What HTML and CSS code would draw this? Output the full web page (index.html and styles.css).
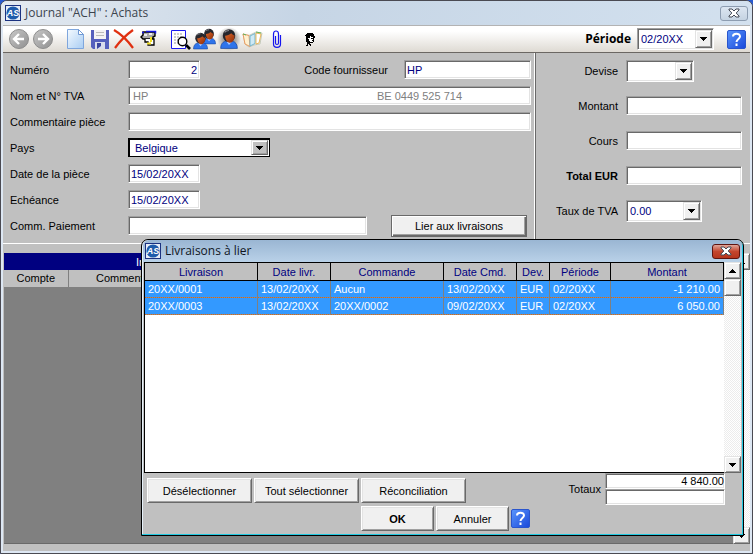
FILE: index.html
```
<!DOCTYPE html>
<html lang="fr">
<head>
<meta charset="utf-8">
<title>Journal "ACH" : Achats</title>
<link rel="stylesheet" href="styles.css">
</head>
<body>
<svg class="defs" aria-hidden="true">
  <defs>
    <linearGradient id="ball" x1="0" y1="0" x2="1" y2="1"><stop offset="0" stop-color="#c9c9c9"/><stop offset="1" stop-color="#8f8f8f"/></linearGradient>
    <linearGradient id="paper" x1="0" y1="0" x2="1" y2="1"><stop offset="0" stop-color="#f4faff"/><stop offset="1" stop-color="#a9cdf3"/></linearGradient>
    <linearGradient id="skin" x1="0" y1="0" x2="1" y2="1"><stop offset="0" stop-color="#e0682a"/><stop offset="1" stop-color="#8c2c08"/></linearGradient>
    <radialGradient id="glow"><stop offset="0.5" stop-color="#a5a19c"/><stop offset="1" stop-color="#a5a19c" stop-opacity="0"/></radialGradient>
    <linearGradient id="helpfill" x1="0" y1="0" x2="1" y2="1"><stop offset="0" stop-color="#5a96fc"/><stop offset="1" stop-color="#1a48da"/></linearGradient>
    <symbol id="logo" viewBox="0 0 16 16">
      <rect width="16" height="16" fill="#1b3280"/><rect x="1" y="1" width="14" height="14" fill="#e8eef8"/>
      <circle cx="8" cy="8" r="6.6" fill="#1f5cab"/>
      <text x="8" y="11.3" text-anchor="middle" class="logo-text">AS</text>
    </symbol>
    <symbol id="down" viewBox="0 0 7 4"><path d="M0 0h7v1h-1v1h-1v1h-1v1h-1v-1h-1v-1h-1v-1h-1z"/></symbol>
    <symbol id="up" viewBox="0 0 7 4"><path d="M0 4h7v-1h-1v-1h-1v-1h-1v-1h-1v1h-1v1h-1v1h-1z"/></symbol>
    <symbol id="cross" viewBox="0 0 12 10"><path d="M1 1h3l2 2 2-2h3v1L8.200 5 11 8v1H8L6 7 4 9H1V8l2.800-3L1 2z" fill="#fff" stroke="#454b57" stroke-width="1"/></symbol>
    <symbol id="help" viewBox="0 0 19 19">
      <rect x="0.500" y="0.500" width="18" height="18" rx="1.500" fill="url(#helpfill)" stroke="#2a55cc"/>
      <path d="M6 6.500C6 3 13 2.800 13 6.500c0 2.300-3.500 2.600-3.500 5.500" fill="none" stroke="#fff" stroke-width="2"/><rect x="8.500" y="13.500" width="2" height="2.500" fill="#fff"/>
    </symbol>
    <symbol id="person" viewBox="0 0 16 18">
      <path d="M0.500 17.500c0-4 2-6 4.500-6.500h6c3 .5 4.500 3 4.500 6.500z" fill="#2f74ea" stroke="#134299" stroke-width="0.600"/>
      <path d="M5.500 11l2.500 3.500 3-3.500z" fill="#a9c9ff"/>
      <ellipse cx="8" cy="6" rx="5.600" ry="5.800" fill="#26262c"/>
      <path d="M4.500 6c2 0 4-.8 5.500-2.200 1 1.200 2 1.700 3 1.900C13.200 9.500 11.200 12.400 9 12.400S4.700 9.800 4.500 6z" fill="url(#skin)"/>
      <path d="M4 3c1-1.300 2.500-1.700 4-1.700" stroke="#8a8a90" fill="none"/>
    </symbol>
  </defs>
</svg>

<main class="window">
  <header class="titlebar">
    <svg class="logo"><use href="#logo"/></svg>
    <h1>Journal "ACH" : Achats</h1>
    <button class="close" type="button" aria-label="Fermer"><svg><use href="#cross"/></svg></button>
  </header>

  <nav class="toolbar">
    <div class="tools">
      <button type="button" aria-label="Précédent"><svg viewBox="0 0 24 24"><circle cx="12" cy="12" r="9.500" fill="url(#ball)" stroke="#8d8d8d"/><path d="M17 12H8M12 7l-5 5 5 5" fill="none" stroke="#fff" stroke-width="2.400"/></svg></button>
      <button type="button" aria-label="Suivant"><svg viewBox="0 0 24 24"><circle cx="12" cy="12" r="9.500" fill="url(#ball)" stroke="#8d8d8d"/><path d="M7 12h9M12 7l5 5-5 5" fill="none" stroke="#fff" stroke-width="2.400"/></svg></button>
    </div>
    <div class="tools">
      <button type="button" aria-label="Nouveau"><svg viewBox="0 0 24 24"><path d="M3.500 2.500h11l5 5v14h-16z" fill="url(#paper)" stroke="#7fa6dc"/><path d="M14.500 2.500v5h5z" fill="#fff" stroke="#6f98d4"/></svg></button>
      <button type="button" aria-label="Enregistrer"><svg viewBox="0 0 24 24"><path d="M3 3h18v19H5l-2-2z" fill="#5560bd"/><rect x="6" y="3" width="12" height="9" fill="#f3f3f3"/><path d="M8 5.500h8M8 8.500h8" stroke="#bbb"/><rect x="7" y="15" width="10" height="7" fill="#d9dcec"/><path d="M9 16h4v3l-4 3z" fill="#3b45a0"/></svg></button>
      <button type="button" aria-label="Supprimer"><svg viewBox="0 0 24 24"><path d="M2 3c7 4 14 11 19 18M21 3C14 8 8 14 3 21" fill="none" stroke="#e03010" stroke-width="2.200"/></svg></button>
      <button type="button" aria-label="Paiement"><svg viewBox="0 0 24 24"><path d="M7 5h12v4l-2 1v2H7l-2-2 2-2z" fill="#aaa" stroke="#000" stroke-width="1.400"/><path d="M6 5.500h2M10 4.500h9.500v2" fill="none" stroke="#1515e0" stroke-width="1.500"/><path d="M8 8h3M13 7h3" stroke="#fff" stroke-width="1.500"/><path d="M9 12v3h3v3h6v-6h-4" fill="#fff" stroke="#000" stroke-width="1.300"/><path d="M15 10v5M11 16.500h4" stroke="#f3df25" stroke-width="2"/></svg></button>
    </div>
    <div class="tools">
      <button type="button" aria-label="Aperçu"><svg viewBox="0 0 24 24"><path d="M2.500 3.500h14v18h-14z" fill="#fff" stroke="#1a1af0"/><path d="M5 7h9M5 10h9M5 13h6M5 16h5" stroke="#999" stroke-dasharray="2 1"/><circle cx="13.500" cy="14.500" r="4.300" fill="#fff" stroke="#000" stroke-width="1.400"/><path d="M17 18l4 4" stroke="#000" stroke-width="2.600"/></svg></button>
      <button type="button" aria-label="Tiers"><svg viewBox="0 0 24 24"><use href="#person" x="9" y="1" width="14" height="17"/><use href="#person" x="0" y="5" width="15" height="18"/></svg></button>
      <button type="button" aria-label="Fournisseur"><svg viewBox="0 0 24 24"><circle cx="12" cy="12" r="12" fill="url(#glow)"/><use href="#person" x="3" y="2" width="18" height="20"/></svg></button>
      <button type="button" aria-label="Carte"><svg viewBox="0 0 24 24"><path d="M2 7l6 1.500 7-3.500 6 1-2 11-6 1-5 2-4-3z" fill="#f5f2df" stroke="#b9c0b0" stroke-width="0.800"/><path d="M2 7l6 1.500 1 11-5-2.500z" fill="#fff0cf" stroke="#e89c62"/><path d="M9 9l5-2.500v10L9 19z" fill="#cfe9f5" stroke="#74b5cf"/><path d="M15 6l5 1-2 9-3 1z" fill="#fff" stroke="#e7a83b" stroke-width="0.800"/><path d="M2 7l3 1M15 5l5 1" stroke="#65b35a"/></svg></button>
      <button type="button" aria-label="Pièces jointes"><svg viewBox="0 0 24 24"><path d="M10.500 9v7c0 2 3 2 3 0V7c0-4-5-4-5 0v10c0 4.500 7 4.500 7 0V8" fill="none" stroke="#1515f0" stroke-width="1.200"/></svg></button>
    </div>
    <div class="tools">
      <button type="button" aria-label="Contact"><svg viewBox="0 0 24 24"><path d="M8 14V9H7V8h1V7h1V6h6v1h1v2h1v2h-1v4h-1v1h-3v1h1v2h-1v-1h-1v-1h-1v2H8v-1h1v-3H8z" fill="#000"/><path d="M12 9h1v1h2v5h-3v-1h-1v-2h-1v-1h2z" fill="#fff"/><path d="M13 11.500h2M14 13.500h1" stroke="#000"/></svg></button>
    </div>
    <label class="period-label" for="periode">Période</label>
    <div class="dropdown period">
      <select id="periode"><option>02/20XX</option></select>
      <span class="knob"><svg><use href="#down"/></svg></span>
    </div>
    <button class="help" type="button" aria-label="Aide"><svg><use href="#help"/></svg></button>
  </nav>

  <form class="form">
    <section class="details">
      <div class="row">
        <label for="numero">Numéro</label>
        <input class="short number" id="numero" value="2">
        <label class="supplier-label" for="code">Code fournisseur</label>
        <input class="supplier" id="code" value="HP">
      </div>
      <div class="row">
        <label for="nom">Nom et N° TVA</label>
        <div class="pair sunken">
          <input id="nom" value="HP" readonly>
          <input aria-label="N° TVA" value="BE 0449 525 714" readonly>
        </div>
      </div>
      <div class="row">
        <label for="commentaire">Commentaire pièce</label>
        <input class="wide" id="commentaire">
      </div>
      <div class="row">
        <label for="pays">Pays</label>
        <div class="dropdown country">
          <select id="pays"><option>Belgique</option></select>
          <span class="knob"><svg><use href="#down"/></svg></span>
        </div>
      </div>
      <div class="row">
        <label for="date">Date de la pièce</label>
        <input class="short" id="date" value="15/02/20XX">
      </div>
      <div class="row">
        <label for="echeance">Echéance</label>
        <input class="short" id="echeance" value="15/02/20XX">
      </div>
      <div class="row">
        <label for="paiement">Comm. Paiement</label>
        <input class="wide" id="paiement">
        <button class="btn link-btn" type="button">Lier aux livraisons</button>
      </div>
    </section>
    <section class="amounts">
      <label for="devise">Devise</label>
      <div class="dropdown currency">
        <select id="devise"><option></option></select>
        <span class="knob"><svg><use href="#down"/></svg></span>
      </div>
      <label for="montant">Montant</label>
      <input id="montant">
      <label for="cours">Cours</label>
      <input id="cours">
      <label class="strong" for="total">Total EUR</label>
      <input id="total">
      <label for="taux">Taux de TVA</label>
      <div class="dropdown rate">
        <select id="taux"><option>0.00</option></select>
        <span class="knob"><svg><use href="#down"/></svg></span>
      </div>
    </section>
  </form>

  <section class="entries">
    <div class="entries-body">
      <table class="entries-table">
        <colgroup><col class="account"><col class="comment"><col></colgroup>
        <thead>
          <tr class="band"><th colspan="3">In</th></tr>
          <tr><th>Compte</th><th>Commentaire</th><th></th></tr>
        </thead>
      </table>
    </div>
    <div class="scrollbar">
      <button type="button" aria-label="Haut"><svg><use href="#up"/></svg></button>
      <div class="track"></div>
      <button type="button" aria-label="Bas"><svg><use href="#down"/></svg></button>
    </div>
  </section>

  <div class="dialog" role="dialog" aria-labelledby="dialog-title">
    <header class="dialog-title">
      <svg class="logo"><use href="#logo"/></svg>
      <h2 id="dialog-title">Livraisons à lier</h2>
      <button class="close red" type="button" aria-label="Fermer"><svg><use href="#cross"/></svg></button>
    </header>
    <div class="list">
      <div class="list-body">
        <table class="deliveries">
          <colgroup><col class="c-delivery"><col class="c-date"><col class="c-delivery"><col class="c-date"><col class="c-cur"><col class="c-period"><col></colgroup>
          <thead><tr><th>Livraison</th><th>Date livr.</th><th>Commande</th><th>Date Cmd.</th><th>Dev.</th><th>Période</th><th>Montant</th></tr></thead>
          <tbody>
            <tr><td>20XX/0001</td><td>13/02/20XX</td><td>Aucun</td><td>13/02/20XX</td><td>EUR</td><td>02/20XX</td><td class="num">-1 210.00</td></tr>
            <tr><td>20XX/0003</td><td>13/02/20XX</td><td>20XX/0002</td><td>09/02/20XX</td><td>EUR</td><td>02/20XX</td><td class="num">6 050.00</td></tr>
          </tbody>
        </table>
      </div>
      <div class="scrollbar">
        <button type="button" aria-label="Haut"><svg><use href="#up"/></svg></button>
        <div class="thumb"></div>
        <div class="track"></div>
        <button type="button" aria-label="Bas"><svg><use href="#down"/></svg></button>
      </div>
    </div>
    <footer class="dialog-foot">
      <div class="actions">
        <button class="btn" type="button">Désélectionner</button>
        <button class="btn" type="button">Tout sélectionner</button>
        <button class="btn" type="button">Réconciliation</button>
        <div class="confirm">
          <button class="btn strong" type="button">OK</button>
          <button class="btn" type="button">Annuler</button>
          <button class="help" type="button" aria-label="Aide"><svg><use href="#help"/></svg></button>
        </div>
      </div>
      <div class="totals">
        <label for="totaux">Totaux</label>
        <div class="total-fields">
          <input id="totaux" value="4 840.00" readonly>
          <input aria-label="Second total" readonly>
        </div>
      </div>
    </footer>
  </div>
</main>
</body>
</html>
```
FILE: styles.css
```
* { box-sizing: border-box; }

body {
  margin: 0;
  background: #2a5bd0;
  font: 11px/14px "Liberation Sans", Arial, sans-serif;
  color: #000;
}

button, input, select { font: inherit; }
button { padding: 0; border: 0; background: none; color: inherit; }
svg { display: block; }
.defs { position: absolute; width: 0; height: 0; }
.logo-text { font: italic bold 9px "Liberation Sans", sans-serif; fill: #fff; }
.strong { font-weight: bold; }

/* Main window frame */
.window {
  position: relative;
  display: flex;
  flex-direction: column;
  min-height: 100vh;
  padding: 0 2px 2px;
  border: 1px solid #4a4a52;
  border-radius: 7px 7px 0 0;
  background: #dde7f3;
}
.titlebar {
  display: flex;
  align-items: center;
  gap: 4px;
  height: 24px;
  margin: 0 -2px;
  padding: 0 4px;
  border-radius: 6px 6px 0 0;
  background: linear-gradient(100deg, #e3e9f0, #c6d5e5 40%, #d3e1ef);
}
.logo { width: 16px; height: 16px; }
h1, h2 {
  flex: 1;
  margin: 0;
  font: 12px/16px "Open Sans", sans-serif;
  color: #3c444e;
}
h2 { color: #10161e; }
.close {
  display: grid;
  place-items: center;
  width: 28px;
  height: 15px;
  border: 1px solid #8d9db1;
  border-radius: 3px;
  background: linear-gradient(#dce6f1, #c5d3e2);
}
.close svg { width: 12px; height: 10px; }
.close.red {
  border-color: #5f1410;
  background: linear-gradient(#e0a79b, #c4452e 50%, #b5351d);
}

/* Toolbar */
.toolbar {
  display: flex;
  align-items: center;
  gap: 9px;
  height: 28px;
  padding: 0 4px;
  border-top: 1px solid #b3b3b3;
  border-bottom: 1px solid #6b6763;
  background: linear-gradient(#fff 20%, #dedad3);
}
.tools { display: flex; }
.tools button, .tools svg { width: 24px; height: 24px; }
.period-label {
  margin-left: auto;
  font: bold 12px/16px "Open Sans", sans-serif;
}
.period { width: 77px; margin: 0 4px 0 -3px; }
.help, .help svg { width: 19px; height: 19px; }

/* Sunken fields */
input, .sunken, .dropdown {
  min-width: 0;
  border: 1px solid;
  border-color: #a0a0a0 #fff #fff #a0a0a0;
  border-radius: 0;
  background: #fff;
  box-shadow: inset 1px 1px #696969, inset -1px -1px #e3e3e3;
  color: #000080;
}
input { height: 19px; padding: 0 2px; outline: 0; }
.dropdown {
  display: grid;
  grid-template-columns: 1fr 17px;
  height: 22px;
  padding: 1px;
}
.dropdown select {
  grid-area: 1 / 1 / 2 / 3;
  min-width: 0;
  padding: 0 20px 0 2px;
  border: 0;
  outline: 0;
  appearance: none;
  background: none;
  color: #000080;
}
.knob {
  grid-area: 1 / 2;
  display: grid;
  place-items: center;
  pointer-events: none;
}
.knob, .scrollbar button, .thumb {
  border: 1px solid;
  border-color: #e3e3e3 #696969 #696969 #e3e3e3;
  background: #f0f0f0;
  box-shadow: inset 1px 1px #fff, inset -1px -1px #a0a0a0;
}
.knob svg, .scrollbar svg { width: 7px; height: 4px; }

/* Entry form */
.form {
  display: flex;
  border-bottom: 1px solid #fff;
  background: #c0c0c0;
}
.details {
  display: flex;
  flex: 1;
  flex-direction: column;
  gap: 7px;
  padding: 7px 3px 8px 7px;
  border-right: 1px solid #fff;
}
.row { display: flex; align-items: center; height: 19px; }
.row > label:first-child { width: 118px; }
.short { width: 72px; }
.number { text-align: right; }
.supplier-label { margin: 0 16px 0 auto; }
.supplier { width: 127px; }
.wide { flex: 1; }
.pair { display: flex; flex: 1; height: 19px; }
.pair input {
  width: 157px;
  height: 17px;
  border: 0;
  background: none;
  box-shadow: none;
  color: #808080;
  padding: 0 4px;
}
.pair input:first-child { flex: 1; }
.country { width: 142px; height: 19px; border-color: #000; box-shadow: inset 1px 1px #000; }
.country select { padding-left: 5px; }
.country .knob { background: #c0c0c0; }
.btn {
  height: 25px;
  border: 1px solid;
  border-color: #fff #696969 #696969 #fff;
  background: #f0f0f0;
  box-shadow: inset 1px 1px #e3e3e3, inset -1px -1px #a0a0a0;
}
.link-btn {
  width: 136px;
  height: 22px;
  margin: 0 4px 0 24px;
  border-color: #696969;
  box-shadow: inset 1px 1px #fff, inset -1px -1px #696969, inset -2px -2px #a0a0a0;
}
.amounts {
  display: grid;
  grid-template-columns: 82px 116px;
  grid-auto-rows: 35px;
  align-content: start;
  align-items: center;
  gap: 0 8px;
  padding-right: 8px;
  border-left: 1px solid #696969;
}
.amounts label { text-align: right; }
.currency { width: 68px; }
.rate { width: 76px; }

/* Entries grid */
.entries {
  display: flex;
  flex: 1;
  padding: 9px 0 7px 1px;
  background: #c0c0c0;
}
.entries-body {
  flex: 1;
  border-bottom: 1px solid #696969;
  background: #808080;
}
.entries-table { width: 100%; table-layout: fixed; border-collapse: collapse; }
.entries-table .account { width: 64px; }
.entries-table .comment { width: 122px; }
.entries-table th {
  height: 17px;
  padding: 0;
  border: 0 solid #808080;
  border-width: 0 1px 1px 0;
  background: #c0c0c0;
  font-weight: normal;
}
.entries-table .band th {
  padding-left: 132px;
  border: 0;
  background: #000080;
  color: #fff;
  text-align: left;
}
.scrollbar {
  display: flex;
  flex-direction: column;
  width: 17px;
  background: repeating-conic-gradient(#fff 0 25%, #ececec 0 50%) 0 0 / 2px 2px;
}
.scrollbar button {
  display: grid;
  place-items: center;
  height: 17px;
}
.thumb { height: 17px; }
.track { flex: 1; }

/* Delivery dialog */
.dialog {
  position: absolute;
  top: 238px;
  right: 8px;
  bottom: 17px;
  left: 140px;
  display: flex;
  flex-direction: column;
  padding: 0 2px;
  border: 1px solid #000;
  border-radius: 7px 7px 0 0;
  background: #c0c0c0;
  box-shadow: inset -1px -1px #20c8e0, inset 1px 1px #e6f1fa;
}
.dialog-title {
  display: flex;
  align-items: center;
  gap: 4px;
  height: 22px;
  margin: 0 -1px;
  padding: 0 2px;
  border-radius: 6px 6px 0 0;
  background: linear-gradient(#9ab6d3, #b9d1e8);
}
.list { display: flex; flex: 1; }
.list-body {
  flex: 1;
  border: 1px solid #000;
  border-right: 0;
  background: #fff;
}
.deliveries {
  width: 100%;
  table-layout: fixed;
  border-collapse: separate;
  border-spacing: 0;
}
.c-delivery { width: 113px; }
.c-date { width: 73px; }
.c-cur { width: 33px; }
.c-period { width: 61px; }
.deliveries th {
  height: 18px;
  padding: 0;
  border: 0 solid #000;
  border-width: 0 1px 1px 0;
  background: #c0c0c0;
  color: #000080;
  font-weight: normal;
}
.deliveries td {
  height: 17px;
  padding: 0 3px 2px;
  border-right: 1px solid #808080;
  background: repeating-linear-gradient(90deg, #d0691e 0 1px, #8c8c8c 1px 2px) 0 100% / 100% 1px no-repeat #3399ff;
  color: #fff;
  white-space: nowrap;
}
.deliveries .num { text-align: right; }
.dialog-foot {
  display: flex;
  justify-content: space-between;
  padding: 0 16px 4px 3px;
}
.actions {
  display: grid;
  grid-template-columns: repeat(3, 105px);
  gap: 3px 2px;
  padding-top: 5px;
}
.confirm {
  grid-column: 3;
  display: grid;
  grid-template-columns: 73px 73px 19px;
  align-items: center;
  gap: 2px;
}
.totals { display: flex; align-items: start; gap: 4px; }
.totals label { margin-top: 9px; }
.total-fields { display: grid; width: 120px; }
.totals input { height: 16px; color: #000; text-align: right; padding: 0; }
```
